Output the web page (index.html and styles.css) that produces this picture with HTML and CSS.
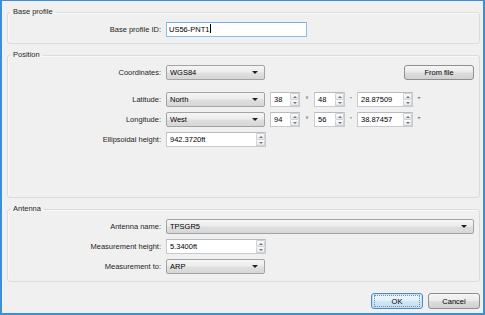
FILE: index.html
```html
<!DOCTYPE html>
<html>
<head>
<meta charset="utf-8">
<link rel="stylesheet" href="styles.css">
</head>
<body>
<div class="window">
  <fieldset class="group g-base">
    <legend>Base profile</legend>
    <div class="form">
      <div class="lbl">Base profile ID:</div>
      <div class="field">
        <div class="input focused w141">US56-PNT1<span class="caret"></span></div>
      </div>
    </div>
  </fieldset>

  <fieldset class="group g-pos">
    <legend>Position</legend>
    <div class="form">
      <div class="lbl">Coordinates:</div>
      <div class="field coords">
        <div class="combo w99"><span class="ctext">WGS84</span><span class="arrow"></span></div>
        <div class="btn from-file">From file</div>
      </div>

      <div class="lbl">Latitude:</div>
      <div class="field">
        <div class="combo w99"><span class="ctext">North</span><span class="arrow"></span></div>
        <div class="spin w30"><span class="val">38</span><span class="btns"><span class="sb up"></span><span class="sb down"></span></span></div>
        <span class="sep s1">°</span>
        <div class="spin w31"><span class="val">48</span><span class="btns"><span class="sb up"></span><span class="sb down"></span></span></div>
        <span class="sep s2">'</span>
        <div class="spin w56"><span class="val">28.87509</span><span class="btns"><span class="sb up"></span><span class="sb down"></span></span></div>
        <span class="sep s3">"</span>
      </div>

      <div class="lbl">Longitude:</div>
      <div class="field">
        <div class="combo w99"><span class="ctext">West</span><span class="arrow"></span></div>
        <div class="spin w30"><span class="val">94</span><span class="btns"><span class="sb up"></span><span class="sb down"></span></span></div>
        <span class="sep s1">°</span>
        <div class="spin w31"><span class="val">56</span><span class="btns"><span class="sb up"></span><span class="sb down"></span></span></div>
        <span class="sep s2">'</span>
        <div class="spin w56"><span class="val">38.87457</span><span class="btns"><span class="sb up"></span><span class="sb down"></span></span></div>
        <span class="sep s3">"</span>
      </div>

      <div class="lbl">Ellipsoidal height:</div>
      <div class="field">
        <div class="spin w100"><span class="val">942.3720ft</span><span class="btns"><span class="sb up"></span><span class="sb down"></span></span></div>
      </div>
    </div>
  </fieldset>

  <fieldset class="group g-ant">
    <legend>Antenna</legend>
    <div class="form">
      <div class="lbl">Antenna name:</div>
      <div class="field">
        <div class="combo grow"><span class="ctext">TPSGR5</span><span class="arrow"></span></div>
      </div>

      <div class="lbl">Measurement height:</div>
      <div class="field">
        <div class="spin w100"><span class="val">5.3400ft</span><span class="btns"><span class="sb up"></span><span class="sb down"></span></span></div>
      </div>

      <div class="lbl">Measurement to:</div>
      <div class="field">
        <div class="combo w99"><span class="ctext">ARP</span><span class="arrow"></span></div>
      </div>
    </div>
  </fieldset>

  <div class="buttons">
    <div class="btn dlg default"><span class="focus">OK</span></div>
    <div class="btn dlg">Cancel</div>
  </div>
</div>
</body>
</html>
```

FILE: styles.css
```css
html, body {
  margin: 0;
  padding: 0;
  background: #f0f0f0;
}

.window {
  width: 485px;
  height: 315px;
  box-sizing: border-box;
  border: 2px solid #3b8fd6;
  border-top-width: 1px;
  background: #f0f0f0;
  padding: 6px 3px 0 5px;
  font-family: "Liberation Sans", Arial, sans-serif;
  font-size: 7.5px;
  color: #1e1e1e;
}

.group {
  margin: 0;
  min-width: 0;
  border: 1px solid #d8dcdf;
  border-radius: 3px;
  padding: 5px 5px 6px 0;
  box-shadow: inset 1px 1px 0 #fafafa;
}

.group legend {
  margin-left: 2px;
  padding: 0 3px;
  line-height: 10px;
  height: 10px;
  color: #1e1e1e;
}

.g-pos {
  margin-top: 6px;
  padding-bottom: 50px;
}

.g-ant {
  margin-top: 6px;
  padding-bottom: 7px;
}

.form {
  display: grid;
  grid-template-columns: 153px 1fr;
  column-gap: 5px;
  row-gap: 5px;
}

.lbl {
  text-align: right;
  line-height: 15px;
  height: 15px;
  white-space: nowrap;
}

.field {
  display: flex;
  align-items: center;
  height: 15px;
}

.coords {
  margin-bottom: 7px;
}

.g-pos .form > .lbl:first-child {
  margin-bottom: 7px;
}

/* text input */
.input {
  height: 15px;
  box-sizing: border-box;
  background: #fff;
  border: 1px solid #b9bcc2;
  border-top-color: #a9acb2;
  padding-left: 2px;
  line-height: 13px;
  color: #000;
  white-space: nowrap;
}

.input.focused {
  border-color: #8ebbe8;
  border-top-color: #7aaee2;
}

.caret {
  display: inline-block;
  width: 1px;
  height: 9px;
  background: #000;
  vertical-align: -1px;
  margin-left: 1px;
}

.w141 { width: 141px; }
.w99 { width: 99px; }
.w100 { width: 100px; }
.w30 { width: 30px; }
.w31 { width: 31px; }
.w56 { width: 56px; }
.grow { flex: 1; }

/* combo box */
.combo {
  height: 15px;
  box-sizing: border-box;
  border: 1px solid #a3a3a3;
  border-radius: 2px;
  background: linear-gradient(#f5f5f5 0%, #ececec 48%, #e0e0e0 52%, #d6d6d6 100%);
  display: flex;
  align-items: center;
  padding: 0 6px 0 3px;
  color: #000;
}

.ctext {
  flex: 1;
  line-height: 13px;
  white-space: nowrap;
}

.arrow {
  width: 0;
  height: 0;
  border-left: 3px solid transparent;
  border-right: 3px solid transparent;
  border-top: 3px solid #222;
}

/* spin box */
.spin {
  height: 15px;
  box-sizing: border-box;
  background: #fff;
  border: 1px solid #c9cacc;
  border-top-color: #b8babd;
  display: flex;
  margin-left: 5px;
}

.spin.w100 {
  margin-left: 0;
}

.val {
  flex: 1;
  padding-left: 3px;
  line-height: 13px;
  color: #000;
  white-space: nowrap;
}

.btns {
  width: 9px;
  display: flex;
  flex-direction: column;
}

.sb {
  flex: 1;
  box-sizing: border-box;
  border: 1px solid #cfd1d4;
  border-radius: 1px;
  background: linear-gradient(#fbfbfb, #e7e8ea);
  display: flex;
  align-items: center;
  justify-content: center;
}

.sb.down {
  border-top: none;
}

.sb::after {
  content: "";
  width: 0;
  height: 0;
  border-left: 2px solid transparent;
  border-right: 2px solid transparent;
}

.sb.up::after {
  border-bottom: 2px solid #6e7680;
}

.sb.down::after {
  border-top: 2px solid #6e7680;
}

.sep {
  text-align: center;
  line-height: 15px;
  height: 15px;
  color: #222;
}

.s1 { width: 14px; }
.s2 { width: 12px; }
.s3 { width: 12px; }

.sep + .spin { margin-left: 0; }

/* buttons */
.btn {
  box-sizing: border-box;
  border: 1px solid #8f8f8f;
  border-radius: 3px;
  background: linear-gradient(#f6f6f6 0%, #ebebeb 48%, #dddddd 52%, #d1d1d1 100%);
  display: flex;
  align-items: center;
  justify-content: center;
  color: #000;
  white-space: nowrap;
}

.from-file {
  width: 70px;
  height: 15px;
  margin-left: auto;
}

.buttons {
  display: flex;
  justify-content: flex-end;
  column-gap: 5px;
  margin-top: 11px;
}

.dlg {
  width: 52px;
  height: 16px;
}

.default {
  border-color: #4b8ac4;
  background: linear-gradient(#eef7fd 0%, #e2f1fb 48%, #cfe8f8 52%, #bfdff4 100%);
  box-shadow: inset 0 0 0 1px #c2e2f8;
}

.focus {
  display: flex;
  align-items: center;
  justify-content: center;
  width: 44px;
  height: 10px;
  outline: 1px dotted #8a8a8a;
}
```
